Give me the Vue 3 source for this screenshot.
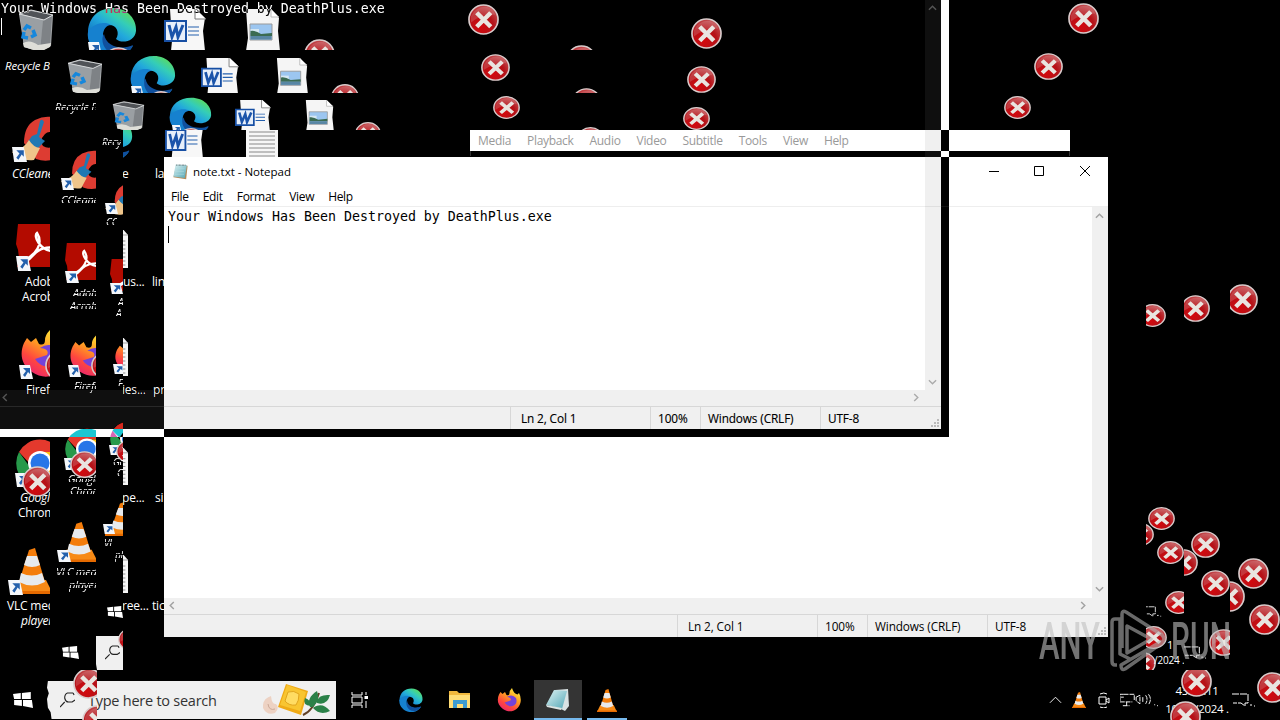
<script setup>
const menu = ['File', 'Edit', 'Format', 'View', 'Help']
const playerMenu = ['Media', 'Playback', 'Audio', 'Video', 'Subtitle', 'Tools', 'View', 'Help']
const status = ['Ln 2, Col 1', '100%', 'Windows (CRLF)', 'UTF-8']
const note = 'Your Windows Has Been Destroyed by DeathPlus.exe'

const icon = (name, x, y, w, h) => ({ name, x, y, w, h })
const label = (text, x, y, size = 12, style = '') => ({ text, x, y, size, style })
// error marks are given by their centre
const err = (cx, cy, w = 31, h = w) => icon('error', cx - w / 2 - 0.5, cy - h / 2 - 0.5, w, h)

// every pane cuts off whatever crosses its edges
const panes = [
  {
    x: 0, y: 0, w: 1280, h: 50,
    items: [
      icon('bin', 18, 9, 36, 43), icon('edge', 87, 7, 50, 50), icon('shortcut', 88, 42, 14, 14), err(119, 63),
      icon('word', 164, 9, 42, 42), icon('image', 245, 9, 35, 42), err(320, 54.5),
      err(484, 20), err(582, 60.5), err(707, 34), err(1084, 19)
    ]
  },
  {
    x: 50, y: 50, w: 1230, h: 43,
    items: [
      icon('bin', 67, 59, 36, 37), icon('edge', 130, 55, 46, 44), icon('shortcut', 131, 86, 13, 12), err(161, 104, 28, 26),
      icon('word', 201, 58, 38, 37), icon('image', 276, 58, 32, 37), err(345, 97, 28, 26),
      err(496, 67.5, 29, 27), err(587, 102, 29, 27), err(702, 79.5, 29, 27), err(1049, 66.5, 29, 27)
    ]
  },
  {
    x: 96, y: 93, w: 1184, h: 37,
    items: [
      icon('bin', 112, 101, 33, 31), icon('edge', 169, 97, 43, 38), icon('shortcut', 172, 125, 10, 9), err(191, 139, 26, 22),
      icon('word', 235, 100, 36, 33), icon('image', 305, 100, 29, 33), err(368, 133.5, 26, 23),
      err(507, 108, 27, 23), err(591, 139, 27, 23), err(697, 118.5, 27, 23), err(1017.5, 107.5, 27, 23)
    ]
  },
  {
    x: 0, y: 50, w: 50, h: 620,
    items: [
      label('Recycle Bin', 5, 66, 11.5, 'slanted'),
      icon('ccleaner', 12, 116, 50, 46), icon('shortcut', 12, 147, 15, 15), label('CCleaner', 12, 174, 12, 'slanted'),
      icon('adobe', 16, 224, 46, 43), icon('shortcut', 16, 256, 15, 15), label('Adobe', 25, 282), label('Acrobat', 22, 297),
      icon('firefox', 20, 330, 48, 48), icon('shortcut', 19, 365, 14, 14), label('Firefox', 26, 390), err(61, 366),
      icon('chrome', 16, 439, 48, 48), icon('shortcut', 15, 473, 14, 14), label('Google', 20, 498, 12, 'slanted'), label('Chrome', 18, 513), err(37.5, 482),
      icon('cone', 11, 548, 42, 46), icon('shortcut', 8, 580, 15, 15), label('VLC media', 7, 606), label('player', 21, 621, 12, 'slanted')
    ]
  },
  {
    x: 50, y: 93, w: 46, h: 577,
    items: [
      label('Recycle Bin', 55, 107, 11, 'broken'),
      icon('ccleaner', 61, 150, 46, 40), icon('shortcut', 61, 178, 13, 12), label('CCleaner', 61, 200, 11, 'broken'),
      icon('adobe', 65, 243, 42, 37), icon('shortcut', 65, 271, 14, 12), label('Adobe', 73, 293, 11, 'broken'), label('Acrobat', 70, 306, 11, 'broken'),
      icon('firefox', 69, 335, 44, 42), icon('shortcut', 68, 365, 13, 12), label('Firefox', 74, 386, 11, 'broken'), err(106, 366, 29, 27),
      icon('chrome', 65, 428, 44, 42), icon('shortcut', 64, 458, 13, 12), label('Google', 68, 479, 11, 'broken'), label('Chrome', 70, 491, 11, 'broken'), err(84.5, 465, 29, 27),
      icon('cone', 60, 522, 38, 40), icon('shortcut', 57, 550, 14, 12), label('VLC media', 56, 572, 11, 'broken'), label('player', 69, 585, 11, 'broken'),
      icon('windows', 62, 646, 17, 13)
    ]
  },
  {
    x: 96, y: 130, w: 27, h: 540,
    items: [
      label('Recy', 102, 142, 10, 'broken'),
      icon('ccleaner', 105, 182, 40, 34), icon('shortcut', 105, 203, 13, 11), label('CC', 106, 222, 10, 'broken'),
      icon('adobe', 110, 259, 38, 32), icon('shortcut', 110, 283, 13, 11), label('A', 118, 302, 10, 'broken'), label('A', 116, 313, 10, 'broken'),
      icon('firefox', 114, 340, 40, 34), icon('shortcut', 113, 364, 12, 10), label('F', 118, 383, 10, 'broken'),
      icon('chrome', 110, 421, 40, 36), icon('shortcut', 109, 445, 12, 10), err(129, 452, 26, 23), label('Go', 113, 462, 10, 'broken'), label('C', 117, 473, 10, 'broken'),
      icon('cone', 105, 502, 35, 34), icon('shortcut', 103, 524, 12, 10), label('VL', 104, 543, 10, 'broken'), label('pl', 115, 555, 10, 'broken'),
      icon('windows', 107, 606, 16, 12),
      icon('paper', 92, 636, 44, 34), icon('lens', 105, 645, 15, 15), err(131, 640, 26, 23)
    ]
  },
  {
    x: 123, y: 130, w: 347, h: 490,
    items: [
      icon('edge', 87, 116, 46, 45), icon('word', 165, 118, 39, 42), icon('text', 246, 119, 32, 40),
      label('e', 122, 174), label('la', 155, 174),
      icon('text', 100, 228, 28, 40), label('us...', 123, 282), label('links', 152, 282),
      icon('text', 100, 336, 28, 40), label('ies...', 122, 390), label('pr', 153, 390),
      icon('text', 100, 446, 28, 39), label('pe...', 122, 498), label('si', 155, 498),
      icon('text', 100, 553, 28, 40), label('ree...', 122, 606), label('tic', 152, 606)
    ]
  },
  { x: 1230, y: 270, w: 50, h: 450, items: [err(1243, 300), err(1230, 597), err(1254, 574), err(1265, 620), err(1273, 688)] },
  {
    x: 1184, y: 270, w: 46, h: 400,
    items: [err(1196, 308.5, 29, 27), err(1184, 563, 29, 27), err(1206, 544.5, 29, 27), err(1216, 584, 29, 27), err(1224, 643, 29, 27), icon('chat', 1184, 646, 23, 13)]
  },
  {
    x: 1146, y: 270, w: 38, h: 400,
    items: [
      err(1152.5, 316, 27, 23), err(1141, 535, 27, 23), err(1162, 519, 27, 23), err(1171, 553, 27, 23),
      err(1179, 603, 27, 23), err(1154, 638, 27, 23), err(1143, 664, 27, 23), icon('chat', 1142, 606, 20, 11),
      label('1', 1167, 645, 11), label('/2024 .', 1154, 660, 10)
    ]
  }
]

const frame = (b, p = { x: 0, y: 0 }) => ({
  left: b.x - p.x + 'px',
  top: b.y - p.y + 'px',
  width: b.w + 'px',
  height: b.h + 'px'
})
const textAt = (t, p) => ({ left: t.x - p.x + 'px', top: t.y - 8 - p.y + 'px', fontSize: t.size + 'px' })
</script>

<template>
  <main class="desktop">
    <svg class="symbols" aria-hidden="true">
      <defs>
        <radialGradient id="red" cx=".4" cy=".75" r=".8">
          <stop offset="0" stop-color="#d4080d" /><stop offset=".55" stop-color="#b51218" /><stop offset="1" stop-color="#c4585b" />
        </radialGradient>
        <linearGradient id="sea" x1="0" y1="1" x2="1" y2="0">
          <stop offset="0" stop-color="#0c62b8" /><stop offset=".45" stop-color="#22a8dc" /><stop offset=".65" stop-color="#34cdb8" /><stop offset=".9" stop-color="#5fdc55" />
        </linearGradient>
        <linearGradient id="flame" x1=".8" y1="0" x2=".2" y2="1">
          <stop offset="0" stop-color="#fff23e" /><stop offset=".4" stop-color="#ff9b22" /><stop offset=".7" stop-color="#ff473f" /><stop offset="1" stop-color="#e72073" />
        </linearGradient>
        <linearGradient id="glass" x1="0" y1="0" x2="1" y2="1">
          <stop offset="0" stop-color="#dff3f4" /><stop offset="1" stop-color="#51a6b5" />
        </linearGradient>
      </defs>
      <symbol id="error" viewBox="0 0 32 32" preserveAspectRatio="none">
        <circle cx="16" cy="16" r="15" fill="url(#red)" stroke="#d9cccc" stroke-width="1.7" />
        <path d="M3 13Q8 2 20 3Q27 5 28 11Q17 9 3 19Z" fill="#fff" opacity=".16" />
        <path d="M9 9 23.500 23.500M23.500 9 9 23.500" stroke="#e9e5e0" stroke-width="4.6" />
      </symbol>
      <symbol id="bin" viewBox="0 0 36 43" preserveAspectRatio="none">
        <path d="M1 5 13 1 35 6 33 37 22 43 6 38Z" fill="#a6a9ac" />
        <path d="M3 5 13 2 34 6 26 11Z" fill="#505357" />
        <path d="M2 5 25 11 22 42 6 38Z" fill="#9a9fa3" /><path d="M25 11 34 7 32 37 22 42Z" fill="#7e8286" />
        <path d="M1 5 13 1 35 6 26 11Z" fill="none" stroke="#d8dadb" />
        <path d="M6 38 5 34Q12 30 20 36L33 34 32 38 22 43Z" fill="#deded8" />
        <path d="M6 21 9 17 13 19M15 21 17 26 13 28M10 29 5 28 6 23" fill="none" stroke="#1687dc" stroke-width="3.5" />
      </symbol>
      <symbol id="edge" viewBox="0 0 50 50" preserveAspectRatio="none">
        <path d="M1 24C2 10 12 1 26 1 41 1 50 13 49 24 48 35 34 37 29 32 33 26 30 18 22 18 14 18 5 21 1 28Z" fill="url(#sea)" />
        <path d="M1 25C6 16 18 14 24 18 18 18 14 26 17 34 21 43 34 45 46 39 38 53 17 54 7 42 2 37 0 31 1 25Z" fill="#1681cf" />
        <path d="M17 27C12 34 19 50 34 48 40 46 45 42 46 38 37 43 19 41 17 27Z" fill="#10509e" />
      </symbol>
      <symbol id="word" viewBox="0 0 42 42" preserveAspectRatio="none">
        <path d="M6 0H32L41 9 39 22 41 42H7L8 32Z" fill="#f7f7f7" /><path d="M31 0V10H42" fill="#fff" stroke="#777" />
        <path d="M24 18H35M24 22H35M24 26H35" stroke="#2460ae" stroke-width="1.2" />
        <path d="M1 12H22V32H1Z" fill="#e7effa" stroke="#174fa4" stroke-width="2" />
        <path d="M5 16 8 28 12 18 14 28 19 16" fill="none" stroke="#1b54aa" stroke-width="3" />
      </symbol>
      <symbol id="image" viewBox="0 0 35 42" preserveAspectRatio="none">
        <path d="M1 0H26L34 9 33 22 35 42H1L3 29Z" fill="#f5f5f5" /><path d="M26 0V8H34" fill="#fff" stroke="#bbb" />
        <path d="M5 15H27V31H5Z" fill="#9cc6f0" stroke="#999" /><path d="M5.500 20H14V24H5.500Z" fill="#d5e7f2" />
        <path d="M5.500 22Q10 21 16 25L27 24V27H5.500Z" fill="#3b6b52" /><path d="M5.500 27H26.500V30.500H5.500Z" fill="#5886a4" />
      </symbol>
      <symbol id="text" viewBox="0 0 32 40" preserveAspectRatio="none">
        <path d="M0 0H25L32 7V40H0Z" fill="#f6f6f6" /><path d="M25 0V7H32" fill="none" stroke="#999" />
        <path d="M3 13H29M3 17H29M3 21H29M3 25H29M3 29H29M3 33H29M3 37H29" stroke="#888" stroke-width="1" />
      </symbol>
      <symbol id="shortcut" viewBox="0 0 14 14" preserveAspectRatio="none">
        <path d="M0 0H11L14 14H2Z" fill="#f4f7fb" /><path d="M4 3H11V9L9 7 6 12 4 10 7 6Z" fill="#2360ac" />
      </symbol>
      <symbol id="ccleaner" viewBox="0 0 50 46" preserveAspectRatio="none">
        <path d="M46 3Q35-2 23 4Q12 10 12 27L24 43Q38 48 48 39L43 29Q37 34 31 30Q27 24 33 18Q37 14 43 18Z" fill="#dd3c32" />
        <path d="M28 5Q30 2 32 6L27 21 33 25 25 33 15 27 20 20 25 18Z" fill="#2078b3" />
        <path d="M17 24Q21 31 28 32L22 44Q9 46 0 36 12 33 17 24Z" fill="#efc58b" />
      </symbol>
      <symbol id="adobe" viewBox="0 0 46 43" preserveAspectRatio="none">
        <path d="M2 0H46V43H1Q5 31 0 20Z" fill="#b30b00" />
        <path d="M10 35C19 31 28 20 21 9 17 12 24 26 36 27 46 24 31 21 22 27 16 31 12 39 10 35Z" fill="none" stroke="#fff" stroke-width="2.4" />
      </symbol>
      <symbol id="firefox" viewBox="0 0 48 48" preserveAspectRatio="none">
        <path d="M4 13 7 8 11 12 16 8 19 14Q25 16 25 10 25 5 30 0 33 11 41 13L44 10Q49 19 47 29C43 45 26 52 12 42 0 34 0 22 4 13Z" fill="url(#flame)" />
        <path d="M20 18Q30 11 38 20 42 32 31 36 21 38 15 29L27 25Q30 19 20 18Z" fill="#7542d9" />
      </symbol>
      <symbol id="chrome" viewBox="0 0 48 48" preserveAspectRatio="none">
        <path d="M3 13A24 24 0 0 1 45 13H24L14 25Z" fill="#e4392d" /><path d="M3 13 16 31 25 36 21 48A24 24 0 0 1 3 13Z" fill="#27994a" />
        <path d="M24 13H45A24 24 0 0 1 21 48L34 29Z" fill="#fbc116" /><circle cx="24" cy="24" r="12" fill="#fff" /><circle cx="24" cy="24" r="9.500" fill="#2876e8" />
      </symbol>
      <symbol id="cone" viewBox="0 0 42 46" preserveAspectRatio="none">
        <path d="M7 32H35L42 46H0Z" fill="#f78a16" /><path d="M18 2 24 0 34 34Q21 41 8 34Z" fill="#f47d0b" />
        <path d="M16 8H26L29 17Q21 21 13 17ZM10 25Q21 30 31 25L34 34Q21 41 8 34Z" fill="#e7eaed" /><path d="M0 43H42V46H0Z" fill="#e56a00" />
      </symbol>
      <symbol id="windows" viewBox="0 0 18 16" preserveAspectRatio="none"><path d="M0 2 7 1V7H1ZM8 1 16 0V7H8ZM1 8H8V14L1 13ZM9 8H17L18 16 9 14Z" fill="#fff" /></symbol>
      <symbol id="paper" viewBox="0 0 44 34" preserveAspectRatio="none"><path d="M1 0H44V34H5L4 28 1 24 0 16 2 11 0 6Z" fill="#f0f0f0" /></symbol>
      <symbol id="lens" viewBox="0 0 16 16" preserveAspectRatio="none"><path d="M14 1H8Q5 2 5 6 6 10 9 10H13L16 8M5 10 0 15M14 1 15 3" fill="none" stroke="#222" stroke-width="1.2" /></symbol>
      <symbol id="chat" viewBox="0 0 24 14" preserveAspectRatio="none"><path d="M0 1H16V10H13V13L9 10H1M18 12H20M22 13H23" fill="none" stroke="#fff" stroke-dasharray="7 1" /></symbol>
      <symbol id="notepad" viewBox="0 0 24 24">
        <path d="M6 3 22 4 20 23 2 20Z" fill="#b08a5b" /><path d="M5 2 21 3 18 21 2 19Z" fill="url(#glass)" />
        <path d="M6 3H20" stroke="#596e72" stroke-width="2" stroke-dasharray="1 1" /><path d="M5 8H18M5 12H17M4 16H17" stroke="#b5dfe2" stroke-width=".6" />
      </symbol>
      <symbol id="notepad-tilt" viewBox="0 0 24 24">
        <path d="M9 2 22 1 23 18 19 23 15 21Z" fill="#d9e2e3" /><path d="M8 2 21 3 16 21 0 17Z" fill="url(#glass)" /><path d="M0 17 16 20 15 22 1 19Z" fill="#dce5e4" />
      </symbol>
      <symbol id="folder" viewBox="0 0 22 20">
        <path d="M0 1H8L10 3H21V18H0Z" fill="#f1b83d" /><path d="M0 5H21V18H0Z" fill="#ffdd76" /><path d="M4 18V10H18V18H14V14H8V18Z" fill="#3c9bd0" />
      </symbol>
      <symbol id="food" viewBox="0 0 68 34">
        <path d="M8 13Q-1 16 0 25 4 33 12 30 17 25 13 21 9 22 8 13Z" fill="#edd2c3" /><path d="M5 21Q6 28 12 26" fill="none" stroke="#cba998" />
        <path d="M23 1 45 8 38 32 15 24Z" fill="#efaa16" /><path d="M24 2 43 9 37 28 17 22Z" fill="#f8c531" /><path d="M25 9Q31 7 36 11 36 18 33 22 26 23 22 18Z" fill="#ffdc63" stroke="#e0a51d" />
        <path d="M40 32Q50 28 56 10" fill="none" stroke="#624126" stroke-width="2" /><path d="M47 24Q43 15 54 8 58 17 50 24ZM54 18Q56 11 67 12 64 23 54 20ZM51 24Q60 19 67 28 57 33 50 25ZM48 23Q39 22 42 15 48 17 48 23Z" fill="#2b8148" />
      </symbol>
    </svg>

    <section v-for="(pane, i) in panes" :key="i" class="pane" :style="frame(pane)">
      <template v-for="(item, j) in pane.items" :key="j">
        <svg v-if="item.name" class="sprite" :style="frame(item, pane)"><use :href="'#' + item.name" width="100%" height="100%" /></svg>
        <span v-else class="caption" :class="item.style" :style="textAt(item, pane)">{{ item.text }}</span>
      </template>
    </section>

    <section class="player">
      <nav class="player-menu"><span v-for="entry in playerMenu" :key="entry">{{ entry }}</span></nav>
    </section>

    <section class="notepad">
      <header class="titlebar">
        <svg class="title-icon"><use href="#notepad" /></svg>
        <span>note.txt - Notepad</span>
        <svg class="controls" viewBox="0 0 102 12"><path d="M0 6.500H10M45.500 1.500H54.500V10.500H45.500ZM91 1 101 11M101 1 91 11" fill="none" stroke="#000" /></svg>
      </header>
      <nav class="menu"><span v-for="entry in menu" :key="entry">{{ entry }}</span></nav>
      <div class="editor">
        <div class="page"><span>{{ note }}</span><i class="caret"></i></div>
        <div class="vscroll">
          <svg viewBox="0 0 10 6"><path d="M1 5 5 1 9 5" /></svg>
          <svg viewBox="0 0 10 6"><path d="M1 1 5 5 9 1" /></svg>
        </div>
      </div>
      <div class="hscroll">
        <svg viewBox="0 0 6 10"><path d="M5 1 1 5 5 9" /></svg>
        <svg viewBox="0 0 6 10"><path d="M1 1 5 5 1 9" /></svg>
      </div>
      <footer class="status">
        <span v-for="cell in status" :key="cell">{{ cell }}</span>
        <svg class="grip" viewBox="0 0 8 8"><path d="M6 0H8V2H6ZM3 3H5V5H3ZM6 3H8V5H6ZM0 6H2V8H0ZM3 6H5V8H3ZM6 6H8V8H6Z" /></svg>
      </footer>
    </section>

    <!-- inverted copy of the editor, blended over everything below it -->
    <section class="ghost">
      <div class="editor">
        <div class="page"><span>{{ note }}</span><i class="caret"></i></div>
        <div class="vscroll">
          <svg viewBox="0 0 10 6"><path d="M1 5 5 1 9 5" /></svg>
          <svg viewBox="0 0 10 6"><path d="M1 1 5 5 9 1" /></svg>
        </div>
      </div>
      <div class="hscroll">
        <svg viewBox="0 0 6 10"><path d="M5 1 1 5 5 9" /></svg>
        <svg viewBox="0 0 6 10"><path d="M1 1 5 5 1 9" /></svg>
      </div>
      <footer class="status">
        <span v-for="cell in status" :key="cell">{{ cell }}</span>
        <svg class="grip" viewBox="0 0 8 8"><path d="M6 0H8V2H6ZM3 3H5V5H3ZM6 3H8V5H6ZM0 6H2V8H0ZM3 6H5V8H3ZM6 6H8V8H6Z" /></svg>
      </footer>
    </section>

    <footer class="taskbar">
      <div class="start"><svg class="start-logo"><use href="#windows" width="100%" height="100%" /></svg></div>
      <div class="search">
        <svg class="search-edge"><use href="#paper" width="100%" height="100%" /></svg>
        <svg class="search-lens"><use href="#lens" width="100%" height="100%" /></svg>
        <span>Type here to search</span>
        <svg class="food"><use href="#food" /></svg>
      </div>
      <div class="task task-view"><svg viewBox="0 0 18 16"><path d="M1 0V3H11V0M1 5H11V11H1ZM1 16V13H11V16M15 0V3M15 9V16" fill="none" stroke="#fff" /><path d="M13.500 4H17V7H13.500Z" fill="#fff" /></svg></div>
      <div class="task"><svg><use href="#edge" width="100%" height="100%" /></svg></div>
      <div class="task"><svg class="folder"><use href="#folder" /></svg></div>
      <div class="task"><svg><use href="#firefox" width="100%" height="100%" /></svg></div>
      <div class="task active"><svg><use href="#notepad-tilt" /></svg></div>
      <div class="task running"><svg class="cone"><use href="#cone" width="100%" height="100%" /></svg></div>
      <div class="tray">
        <svg class="chevron" viewBox="0 0 14 8"><path d="M1 7 7 1 13 7" /></svg>
        <svg class="tray-cone"><use href="#cone" width="100%" height="100%" /></svg>
        <svg class="meet" viewBox="0 0 12 16"><path d="M1 5H8V12H1ZM8 8 11 6V11L8 9M2 2Q6 0 9 2M2 15Q6 17 9 15" /></svg>
        <svg class="network" viewBox="0 0 40 14"><path d="M4 1H0V9H13M4 1H15V7M1 4H4M7 9V13M3 13H10M17 4 21 2V11L17 8ZM24 4V9M27 2Q30 6 27 11M30 1Q34 6 30 12M36 12H37M39 13H40" stroke-dasharray="5 1" /></svg>
        <div class="clock"><span>43:21:11</span><span>10/17/2024 .</span></div>
        <svg class="notice"><use href="#chat" width="100%" height="100%" /></svg>
      </div>
    </footer>

    <section class="pane" :style="frame({ x: 50, y: 670, w: 47, h: 50 })">
      <svg class="sprite" :style="frame({ x: 23, y: -2, w: 31, h: 31 })"><use href="#error" width="100%" height="100%" /></svg>
      <svg class="sprite" :style="frame({ x: 32, y: 35, w: 31, h: 31 })"><use href="#error" width="100%" height="100%" /></svg>
    </section>
    <section class="pane" :style="frame({ x: 1146, y: 670, w: 134, h: 50 })">
      <svg class="sprite" :style="frame({ x: 35, y: -4, w: 31, h: 31 })"><use href="#error" width="100%" height="100%" /></svg>
      <svg class="sprite" :style="frame({ x: 23.500, y: 31, w: 31, h: 31 })"><use href="#error" width="100%" height="100%" /></svg>
    </section>

    <svg class="watermark" viewBox="0 0 200 66">
      <text x="3" y="51" textLength="61" lengthAdjust="spacingAndGlyphs">ANY</text>
      <text x="135" y="51" textLength="60" lengthAdjust="spacingAndGlyphs">RUN</text>
      <path d="M81 57H79Q76 57 76 53V14Q76 11 79 11H84V46L94 51M86 40V6Q86 2 90 4L126 27Q130 31 126 35L89 61Q85 63 85 57L126 33M91 18V45L115 31Z" />
    </svg>
  </main>
</template>

<style>
body {
  background: #000;
}
</style>

<style scoped>
.desktop {
  position: relative;
  isolation: isolate;
  width: 1280px;
  height: 720px;
  overflow: hidden;
  background: #000;
  color: #fff;
  font: 12px/16px "Open Sans", "Noto Sans", sans-serif;
}

.symbols {
  position: absolute;
  width: 0;
  height: 0;
}

.pane,
.player,
.notepad,
.ghost,
.watermark {
  position: absolute;
  overflow: hidden;
}

.sprite,
.caption {
  position: absolute;
}

.caption {
  white-space: pre;
  letter-spacing: -0.2px;
}

.slanted {
  font-style: italic;
}

.broken {
  font-style: italic;
  -webkit-mask-image: repeating-linear-gradient(180deg, #000 0 3px, transparent 3px 4px);
  mask-image: repeating-linear-gradient(180deg, #000 0 3px, transparent 3px 4px);
}

.player {
  left: 470px;
  top: 130px;
  width: 600px;
  height: 26px;
  box-shadow: inset 1px 0 #333, inset -1px 0 #333;
}

.player-menu {
  display: flex;
  gap: 16px;
  height: 21px;
  padding-left: 8px;
  line-height: 22px;
  letter-spacing: -0.31px;
  background: #fff;
  color: #999;
}

.notepad {
  left: 164px;
  top: 157px;
  width: 944px;
  height: 480px;
  display: flex;
  flex-direction: column;
  background: #fff;
  color: #000;
}

.titlebar {
  display: flex;
  align-items: center;
  height: 29px;
  padding: 0 17px 0 8px;
  font-size: 11.5px;
}

.title-icon {
  width: 17px;
  height: 17px;
  margin-right: 4px;
}

.controls {
  width: 102px;
  height: 12px;
  margin: 0 0 1px auto;
}

.menu {
  display: flex;
  gap: 14px;
  height: 21px;
  padding-left: 7px;
  line-height: 22px;
  letter-spacing: -0.32px;
  border-bottom: 1px solid #eee;
  box-sizing: border-box;
}

.editor {
  flex: 1;
  display: flex;
}

.page {
  flex: 1;
  padding: 1px 0 0 4px;
  font: 13.29px/18px "DejaVu Sans Mono", "Liberation Mono", monospace;
  white-space: pre;
}

.page span,
.caret {
  display: block;
}

.caret {
  width: 1px;
  height: 17px;
  background: currentColor;
}

.vscroll {
  width: 16px;
  box-sizing: border-box;
  padding: 6px 3px;
  display: flex;
  flex-direction: column;
  justify-content: space-between;
  background: #f0f0f0;
}

.vscroll svg {
  width: 9px;
  height: 6px;
}

.hscroll {
  height: 16px;
  box-sizing: border-box;
  display: flex;
  align-items: center;
  justify-content: space-between;
  padding: 0 22px 1px 5px;
  background: #f0f0f0;
}

.hscroll svg {
  width: 6px;
  height: 9px;
}

.vscroll path,
.hscroll path {
  fill: none;
  stroke: #a2a2a2;
  stroke-width: 1.6;
}

.status {
  height: 23px;
  box-sizing: border-box;
  display: grid;
  grid-template-columns: 140px 50px 120px 120px;
  justify-content: end;
  padding-right: 1px;
  position: relative;
  background: #f0f0f0;
  border-top: 1px solid #d7d7d7;
  font-size: 11.8px;
  line-height: 23px;
  letter-spacing: -0.12px;
}

.status span {
  border-left: 1px solid #d7d7d7;
  padding-left: 7px;
  white-space: nowrap;
}

.status span:first-child {
  padding-left: 10px;
}

.grip {
  position: absolute;
  right: 2px;
  bottom: 2px;
  width: 8px;
  height: 8px;
  fill: #bbb;
}

.ghost {
  left: 0;
  top: 0;
  width: 949px;
  height: 437px;
  box-sizing: border-box;
  border-right: 8px solid #fff;
  border-bottom: 8px solid #fff;
  display: flex;
  flex-direction: column;
  mix-blend-mode: difference;
}

.ghost .page {
  padding: 0 0 0 1px;
}

.ghost .vscroll,
.ghost .hscroll,
.ghost .status {
  background: #0f0f0f;
}

.ghost .vscroll {
  padding: 5px 3px;
}

.ghost .hscroll {
  padding-left: 2px;
}

.ghost .vscroll path,
.ghost .hscroll path {
  stroke: #555;
}

.ghost .status,
.ghost .status span {
  border-color: #282828;
}

.ghost .grip {
  fill: #444;
}

.taskbar {
  margin-top: 680px;
  height: 40px;
  display: flex;
}

.start {
  width: 47px;
  display: flex;
  align-items: center;
  justify-content: flex-end;
}

.start-logo {
  width: 20px;
  height: 16px;
  margin: 0 14px 1px 0;
}

.search {
  width: 289px;
  height: 38px;
  margin-top: 1px;
  display: flex;
  align-items: center;
  background: linear-gradient(90deg, transparent 20px, #f0f0f0 20px);
  color: #333;
  font-size: 14.5px;
  letter-spacing: -0.25px;
  position: relative;
}

.search-edge {
  position: absolute;
  left: 0;
  top: 0;
  width: 40px;
  height: 38px;
}

.search-lens {
  width: 15px;
  height: 16px;
  margin: 0 13px;
  position: relative;
}

.search span {
  position: relative;
  padding-top: 2px;
  white-space: nowrap;
}

.food {
  width: 68px;
  height: 34px;
  margin: 0 5px 0 auto;
}

.task {
  width: 48px;
  margin-right: 1px;
  box-sizing: border-box;
  display: flex;
  align-items: center;
  justify-content: center;
}

.task svg {
  width: 24px;
  height: 24px;
}

.task-view {
  width: 50px;
}

.task-view svg {
  width: 18px;
  height: 16px;
  margin-right: 2px;
}

.task .folder {
  width: 22px;
  height: 20px;
}

.task .cone {
  width: 20px;
  height: 23px;
}

.active {
  background: #343434;
  box-shadow: inset 0 -2px #76b9ed;
}

.running {
  background: linear-gradient(#76b9ed, #76b9ed) 4px 38px / 40px 2px no-repeat;
}

.tray {
  margin-left: auto;
  width: 231px;
  display: flex;
  align-items: center;
}

.tray path {
  fill: none;
  stroke: #fff;
}

.chevron {
  width: 13px;
  height: 8px;
  margin-right: 10px;
}

.tray-cone {
  width: 14px;
  height: 16px;
  margin-right: 12px;
}

.meet {
  width: 12px;
  height: 16px;
  margin-right: 10px;
}

.network {
  width: 38px;
  height: 14px;
}

.clock {
  width: 64px;
  height: 36px;
  margin-left: 7px;
  display: flex;
  flex-direction: column;
  align-items: center;
  line-height: 18px;
  font-size: 11.5px;
  letter-spacing: -0.3px;
  white-space: nowrap;
}

.notice {
  width: 24px;
  height: 14px;
  margin-left: 3px;
}

.watermark {
  left: 1036px;
  top: 608px;
  width: 200px;
  height: 66px;
  opacity: 0.6;
}

.watermark text {
  fill: #c0c0c0;
  font: 500 52px Roboto, sans-serif;
}

.watermark path {
  fill: none;
  stroke: #b0b0b0;
  stroke-width: 3.5;
  stroke-linejoin: round;
}
</style>
